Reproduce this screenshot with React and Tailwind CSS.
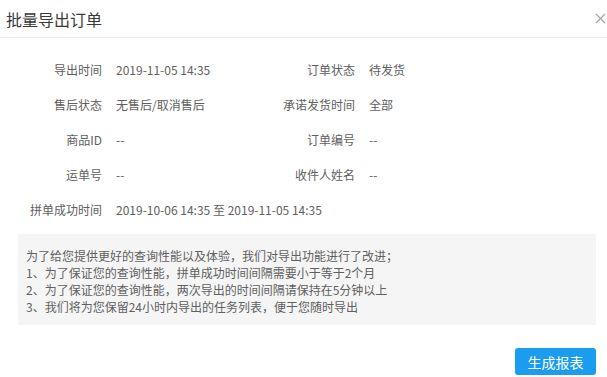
export default function App() {
  const rows = [
    ["导出时间", "2019-11-05 14:35", "订单状态", "待发货"],
    ["售后状态", "无售后/取消售后", "承诺发货时间", "全部"],
    ["商品ID", "--", "订单编号", "--"],
    ["运单号", "--", "收件人姓名", "--"],
  ];

  return (
    <div
      className="w-[607px] h-[377px] bg-white overflow-hidden text-[#606060]"
      style={{ fontFamily: '"Noto Sans CJK SC", "Microsoft YaHei", sans-serif' }}
    >
      <div className="h-[38px] flex items-center justify-between pl-[6px] pr-[1px] border-b border-[#e9e9e9]">
        <h1 className="text-[16px] text-[#3a3a3a] leading-none">批量导出订单</h1>
        <svg width="11" height="11" viewBox="0 0 11 11">
          <path d="M1 1L10 10M10 1L1 10" stroke="#a6a6a6" strokeWidth="1.2" />
        </svg>
      </div>

      <div className="pl-[18px] pr-[11px]">
        <div className="pt-[14px] text-[12px]">
          {rows.map((r) => (
            <div key={r[0]} className="h-[35px] flex items-center">
              <div className="w-[247px] flex items-center">
                <span className="w-[84px] text-right">{r[0]}</span>
                <span className="ml-[14px]">{r[1]}</span>
              </div>
              <div className="flex items-center">
                <span className="w-[90px] text-right">{r[2]}</span>
                <span className="ml-[14px]">{r[3]}</span>
              </div>
            </div>
          ))}
          <div className="h-[35px] flex items-center">
            <span className="w-[84px] text-right">拼单成功时间</span>
            <span className="ml-[14px]">2019-10-06 14:35 至 2019-11-05 14:35</span>
          </div>
        </div>

        <div className="mt-[7px] h-[91px] bg-[#f5f5f5] pl-[8px] pt-[13px] text-[12px] leading-[17px]">
          <p>为了给您提供更好的查询性能以及体验，我们对导出功能进行了改进；</p>
          <p>1、为了保证您的查询性能，拼单成功时间间隔需要小于等于2个月</p>
          <p>2、为了保证您的查询性能，两次导出的时间间隔请保持在5分钟以上</p>
          <p>3、我们将为您保留24小时内导出的任务列表，便于您随时导出</p>
        </div>

        <div className="flex justify-end mt-[23px]">
          <button className="w-[81px] h-[27px] rounded-[3px] bg-[#1a9cf0] text-white text-[14px] leading-none">
            生成报表
          </button>
        </div>
      </div>
    </div>
  );
}
